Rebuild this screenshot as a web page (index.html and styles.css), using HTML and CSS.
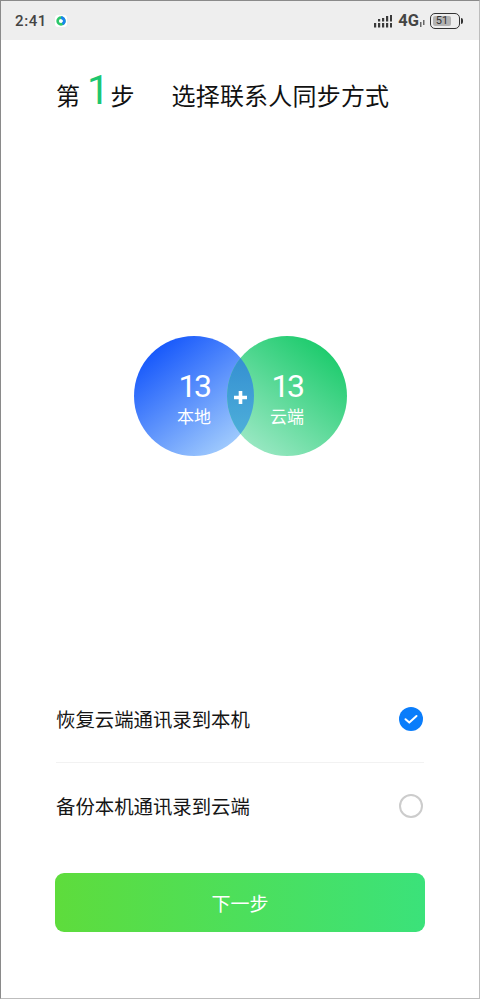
FILE: index.html
```html
<!DOCTYPE html>
<html lang="zh-CN">
  <head>
    <meta charset="UTF-8" />
    <meta name="viewport" content="width=device-width, initial-scale=1.0" />
    <title>选择联系人同步方式</title>
    <link rel="stylesheet" href="styles.css">
  </head>
  <body>
    <div class="screen">
      <div class="status-bar">
        <span class="time">2:41</span>
        <svg class="app-dot" width="12" height="12" viewBox="0 0 12 12">
          <rect width="12" height="12" rx="3" fill="#fff" />
          <circle cx="6" cy="6" r="3.4" fill="none" stroke="#2cc86a" stroke-width="2.6" />
          <path d="M6 2.6a3.4 3.4 0 0 1 1.5 6.4" fill="none" stroke="#1a84f0" stroke-width="2.6" />
        </svg>
        <div class="status-right">
          <svg class="signal" width="18" height="14" viewBox="0 0 18 14" fill="#3a3a3a">
            <rect x="0" y="9" width="2.2" height="4.5" />
            <rect x="4" y="9" width="2.2" height="4.5" />
            <rect x="8" y="9" width="2.2" height="4.5" />
            <rect x="12" y="9" width="2.2" height="4.5" />
            <rect x="16" y="9" width="2.2" height="4.5" />
            <rect x="4" y="5" width="2.2" height="2.5" />
            <rect x="8" y="4" width="2.2" height="3.5" />
            <rect x="12" y="2" width="2.2" height="5.5" />
            <rect x="16" y="1" width="2.2" height="6.5" />
          </svg>
          <span class="net">4G</span>
          <svg class="net-arrows" width="5" height="7" viewBox="0 0 5 7" fill="#666">
            <rect x="0" y="2" width="1.5" height="5" />
            <rect x="3" y="0" width="1.5" height="5" />
          </svg>
          <div class="battery">
            <div class="battery-level">51</div>
          </div>
          <div class="battery-tip"></div>
        </div>
      </div>

      <h1 class="title">
        <span>第</span>
        <span class="step-num">1</span>
        <span>步</span>
        <span class="title-text">选择联系人同步方式</span>
      </h1>

      <div class="venn-wrap">
        <svg class="venn" width="214" height="120" viewBox="0 0 214 120">
          <defs>
            <linearGradient id="blueGrad" x1="0.12" y1="0.1" x2="0.8" y2="0.95">
              <stop offset="0" stop-color="#1254fb" />
              <stop offset="1" stop-color="#a3cdfd" />
            </linearGradient>
            <linearGradient id="greenGrad" x1="0.85" y1="0.1" x2="0.2" y2="0.95">
              <stop offset="0" stop-color="#1ccb6c" />
              <stop offset="1" stop-color="#9be8c4" />
            </linearGradient>
            <linearGradient id="lensGrad" x1="0" y1="0" x2="0" y2="1">
              <stop offset="0" stop-color="#2d86cf" />
              <stop offset="1" stop-color="#55b8dc" />
            </linearGradient>
            <clipPath id="leftClip">
              <circle cx="60" cy="60" r="60" />
            </clipPath>
          </defs>
          <circle cx="60" cy="60" r="60" fill="url(#blueGrad)" />
          <circle cx="153" cy="60" r="60" fill="url(#greenGrad)" />
          <circle cx="153" cy="60" r="60" fill="url(#lensGrad)" clip-path="url(#leftClip)" />
          <text class="venn-num" x="60" y="61" text-anchor="middle">13</text>
          <text class="venn-label" x="60" y="87" text-anchor="middle">本地</text>
          <text class="venn-num" x="153" y="61" text-anchor="middle">13</text>
          <text class="venn-label" x="153" y="87" text-anchor="middle">云端</text>
          <path d="M106.5 55v13M100 61.5h13" stroke="#fff" stroke-width="3.6" fill="none" />
        </svg>
      </div>

      <div class="options">
        <div class="option option-first">
          <span>恢复云端通讯录到本机</span>
          <svg class="check" width="24" height="24" viewBox="0 0 24 24">
            <circle cx="12" cy="12" r="12" fill="#0a7dfb" />
            <path d="M6.5 12.2l3.8 3.4 7.2-6.6" fill="none" stroke="#fff" stroke-width="2" stroke-linecap="round" stroke-linejoin="round" />
          </svg>
        </div>
        <div class="option">
          <span>备份本机通讯录到云端</span>
          <svg class="check" width="24" height="24" viewBox="0 0 24 24">
            <circle cx="12" cy="12" r="11" fill="none" stroke="#cccccc" stroke-width="2" />
          </svg>
        </div>
      </div>

      <button class="next-btn" type="button">下一步</button>
    </div>
  </body>
</html>
```

FILE: styles.css
```css
html,
body {
  margin: 0;
  padding: 0;
}

body {
  font-family: "Noto Sans CJK SC", "Noto Sans", sans-serif;
  background-color: #fff;
}

.screen {
  width: 480px;
  height: 999px;
  box-sizing: border-box;
  border: 1px solid #8a8a8a;
  border-right-color: #bdbdbd;
  border-bottom-color: #bdbdbd;
  background-color: #fff;
  display: flex;
  flex-direction: column;
}

/* Status bar */
.status-bar {
  height: 39px;
  background-color: #eeeeee;
  display: flex;
  align-items: center;
  padding: 0 16px 0 14px;
  flex-shrink: 0;
}

.time {
  font-family: Roboto, sans-serif;
  font-size: 15px;
  font-weight: 500;
  letter-spacing: 0.6px;
  color: #444;
}

.app-dot {
  margin-left: 8px;
}

.status-right {
  margin-left: auto;
  display: flex;
  align-items: center;
}

.net {
  font-family: Roboto, sans-serif;
  font-size: 16.5px;
  font-weight: 700;
  color: #444;
  margin-left: 6px;
}

.net-arrows {
  margin: 5px 0 0 1px;
}

.battery {
  width: 30px;
  height: 16px;
  margin-left: 5px;
  padding: 2px;
  box-sizing: border-box;
  border: 1.5px solid #333;
  border-radius: 5px;
}

.battery-level {
  width: 18px;
  height: 100%;
  background-color: #b3b3b3;
  border-radius: 2px;
  font-family: Roboto, sans-serif;
  font-size: 11px;
  line-height: 10px;
  text-align: center;
  color: #333;
}

.battery-tip {
  width: 2px;
  height: 6px;
  margin-left: 1px;
  background-color: #333;
  border-radius: 0 2px 2px 0;
}

/* Title */
.title {
  margin: 32px 0 0 55px;
  height: 44px;
  display: flex;
  align-items: center;
  font-size: 24px;
  font-weight: 400;
  color: #111;
  white-space: nowrap;
}

.step-num {
  font-family: Roboto, sans-serif;
  font-size: 40px;
  line-height: 44px;
  color: #1cc66f;
  margin: -6px 1px 0 7px;
}

.title-text {
  margin-left: 37px;
  letter-spacing: 0.2px;
}

/* Circles */
.venn-wrap {
  margin: 220px 0 0 133px;
  height: 120px;
  flex-shrink: 0;
}

.venn {
  display: block;
}

.venn-num {
  font-family: Roboto, sans-serif;
  font-size: 32px;
  font-weight: 400;
  letter-spacing: -2.5px;
  fill: #fff;
}

.venn-label {
  font-size: 17px;
  fill: #fff;
}

/* Options */
.options {
  margin: 219px 55px 0 55px;
}

.option {
  height: 85px;
  display: flex;
  align-items: center;
  justify-content: space-between;
  font-size: 19.4px;
  color: #151515;
}

.option-first {
  height: 87px;
  border-bottom: 1px solid #f2f2f2;
}

.check {
  margin-right: 1px;
}

/* Button */
.next-btn {
  width: 370px;
  height: 59px;
  margin: 25px 0 0 54px;
  border: none;
  border-radius: 9px;
  background: linear-gradient(90deg, #5edc3c, #3be27a);
  color: #fff;
  font-family: inherit;
  font-size: 19px;
  cursor: pointer;
}
```
